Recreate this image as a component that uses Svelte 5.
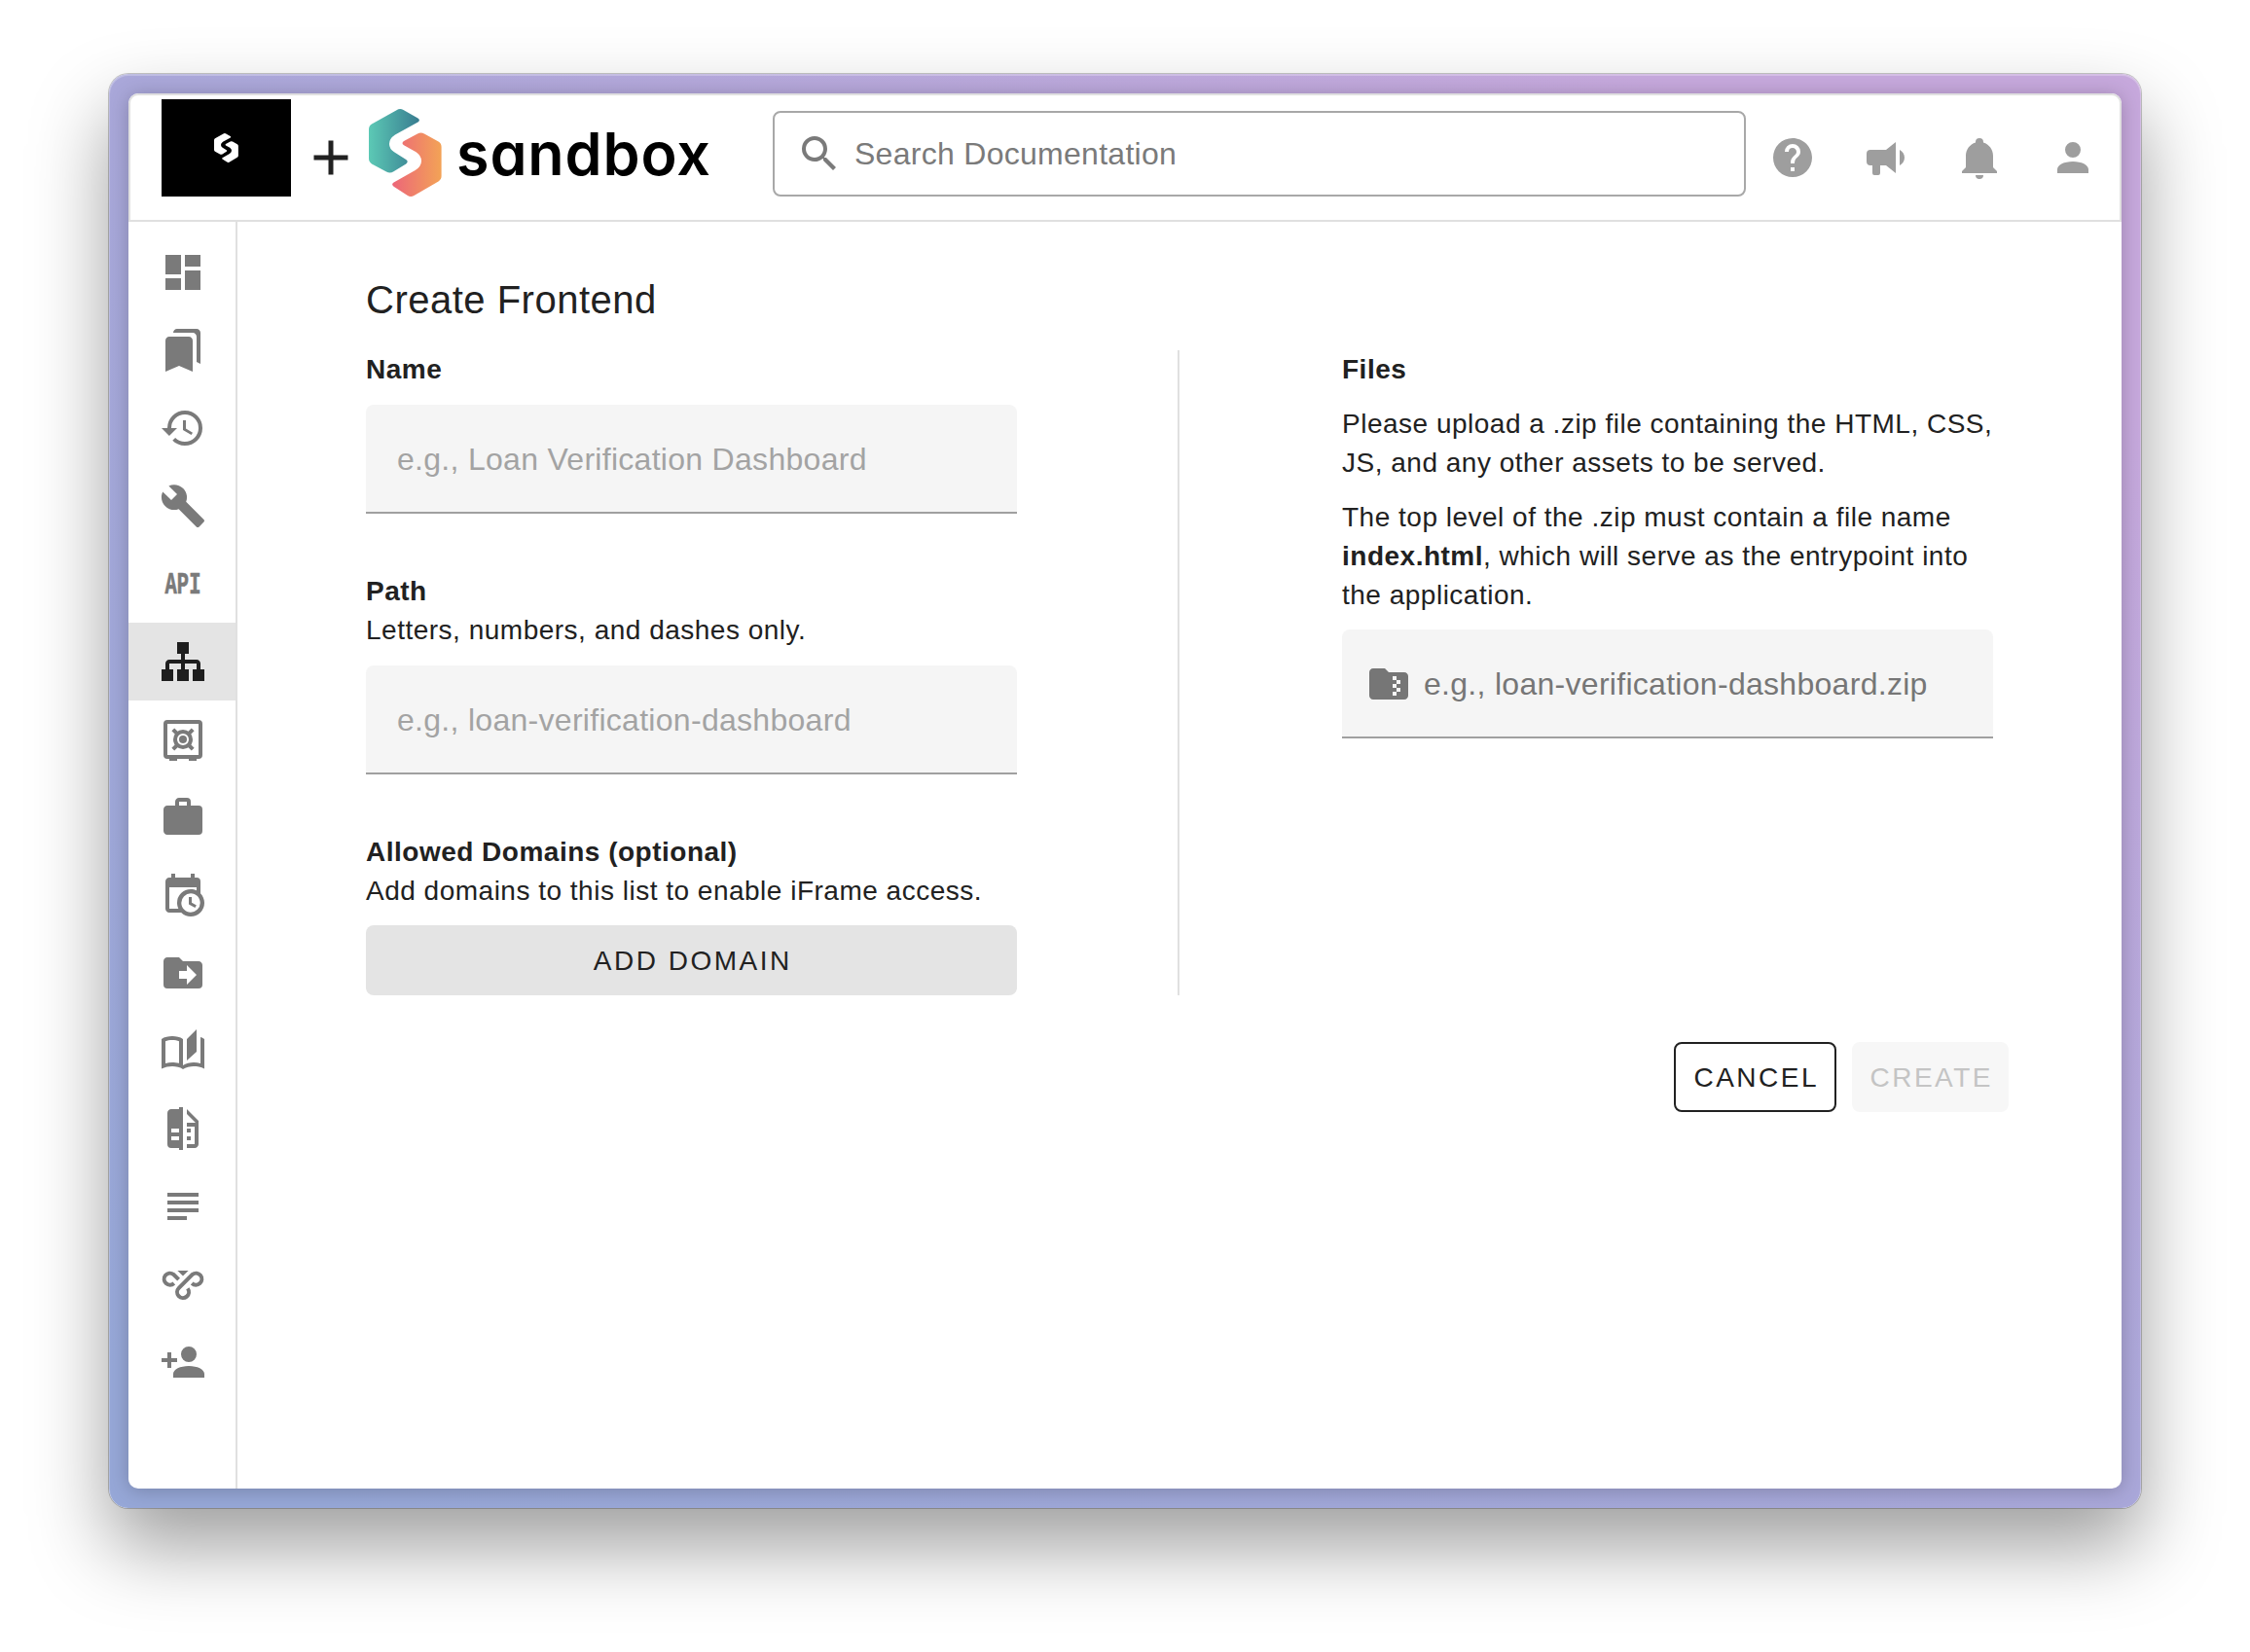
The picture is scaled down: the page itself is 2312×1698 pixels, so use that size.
<script>
  const logoTop =
    'M28.5,1.2 Q32,-1 35.5,1 L50,9.2 Q53.5,11.4 50.5,13.6 L27,26.6 Q21,30.5 21,36 Q21,41 26,44.2 L38.2,52 Q41.2,54 38.2,56.4 L25.5,64.3 Q21.7,66.8 18,64.5 L3,56.4 Q0,54.5 0,51 V21 Q0,17.5 3,15.6 Z';
  const logoBottom =
    'M50,25.4 Q53.5,23.4 57,25.4 L71.5,33.6 Q74.6,35.5 74.6,39 V69 Q74.6,72.5 71.5,74.4 L46.5,89 Q43,91.2 39.5,88.8 L25.6,79.8 Q22.6,77.6 25.6,75.6 L47.7,63 Q54,59 54,53.5 Q54,48 48.5,44.3 L36,37.2 Q33,35.2 36,33 Z';

  const navItems = [
    { name: 'dashboard', path: 'M13,3V9H21V3M13,21H21V11H13M3,21H11V15H3M3,13H11V3H3V13Z' },
    { name: 'bookmarks', path: 'M19 18l2 1V3c0-1.1-.9-2-2-2H8.99C7.89 1 7 1.9 7 3h10c1.1 0 2 .9 2 2v13zM15 5H5c-1.1 0-2 .9-2 2v16l7-3 7 3V7c0-1.1-.9-2-2-2z' },
    { name: 'history', path: 'M13.5,8H12V13L16.28,15.54L17,14.33L13.5,12.25V8M13,3A9,9 0 0,0 4,12H1L4.96,16.03L9,12H6A7,7 0 0,1 13,5A7,7 0 0,1 20,12A7,7 0 0,1 13,19C11.07,19 9.32,18.21 8.06,16.94L6.64,18.36C8.27,20 10.5,21 13,21A9,9 0 0,0 22,12A9,9 0 0,0 13,3' },
    { name: 'tools', path: 'M22.7,19L13.6,9.9C14.5,7.6 14,4.9 12.1,3C10.1,1 7.1,0.6 4.7,1.7L9,6L6,9L1.6,4.7C0.4,7.1 0.9,10.1 2.9,12.1C4.8,14 7.5,14.5 9.8,13.6L18.9,22.7C19.3,23.1 19.9,23.1 20.3,22.7L22.6,20.4C23.1,20 23.1,19.3 22.7,19Z' },
    { name: 'api', label: 'API' },
    { name: 'frontends', active: true, path: 'M9,2V8H11V11H5C3.89,11 3,11.89 3,13V16H1V22H7V16H5V13H11V16H9V22H15V16H13V13H19V16H17V22H23V16H21V13C21,11.89 20.11,11 19,11H13V8H15V2H9Z' },
    { name: 'vault' },
    { name: 'briefcase', path: 'M10,2H14A2,2 0 0,1 16,4V6H20A2,2 0 0,1 22,8V19A2,2 0 0,1 20,21H4C2.89,21 2,20.1 2,19V8C2,6.89 2.89,6 4,6H8V4C8,2.89 8.89,2 10,2M14,6V4H10V6H14Z' },
    { name: 'schedule', path: 'M15,13H16.5V15.82L18.94,17.23L18.19,18.53L15,16.69V13M19,8H5V19H9.67C9.24,18.09 9,17.07 9,16A7,7 0 0,1 16,9C17.07,9 18.09,9.24 19,9.67V8M5,21C3.89,21 3,20.1 3,19V5C3,3.89 3.89,3 5,3H6V1H8V3H16V1H18V3H19A2,2 0 0,1 21,5V11.1C22.24,12.36 23,14.09 23,16A7,7 0 0,1 16,23C14.09,23 12.36,22.24 11.1,21H5M16,11.15A4.85,4.85 0 0,0 11.15,16C11.15,18.68 13.32,20.85 16,20.85A4.85,4.85 0 0,0 20.85,16C20.85,13.32 18.68,11.15 16,11.15Z' },
    { name: 'transfers', path: 'M14,18V15H10V11H14V8L19,13M20,6H12L10,4H4C2.89,4 2,4.89 2,6V18A2,2 0 0,0 4,20H20A2,2 0 0,0 22,18V8C22,6.89 21.1,6 20,6Z' },
    { name: 'docs', path: 'M19 1L14 6V17L19 12.5V1M21 5V18.5C19.9 18.15 18.7 18 17.5 18C15.8 18 13.35 18.65 12 19.5V6C10.55 4.9 8.45 4.5 6.5 4.5C4.55 4.5 2.45 4.9 1 6V21.3C2.6 20.4 4.9 20 6.5 20C8.45 20 10.55 20.4 12 21.5C13.35 20.65 15.8 20 17.5 20C19.15 20 21.3 20.3 23 21.3V6C22.4 5.55 21.75 5.25 21 5M10 18.41C8.75 18.09 7.5 18 6.5 18C5.44 18 4.18 18.19 3 18.5V7.13C3.91 6.73 5.14 6.5 6.5 6.5C7.86 6.5 9.09 6.73 10 7.13V18.41Z' },
    { name: 'compare', path: 'M10,18H6V16H10V18M10,14H6V12H10V14M10,1V2H6C4.89,2 4,2.89 4,4V20A2,2 0 0,0 6,22H10V23H12V1H10M20,8V20C20,21.11 19.11,22 18,22H14V20H18V11H14V9H18.5L14,4.5V2L20,8M16,14H14V12H16V14M16,18H14V16H16V18Z' },
    { name: 'logs', path: 'M4,5H20V7H4V5M4,9H20V11H4V9M4,13H20V15H4V13M4,17H14V19H4V17Z' },
    { name: 'pipelines' },
    { name: 'invite', path: 'M15,14C10.58,14 7,15.79 7,18V20H23V18C23,15.79 19.42,14 15,14M6,10V7H4V10H1V12H4V15H6V12H9V10M15,12A4,4 0 0,0 19,8A4,4 0 0,0 15,4A4,4 0 0,0 11,8A4,4 0 0,0 15,12Z' }
  ];

  const actions = [
    { name: 'Help', path: 'M15.07,11.25L14.17,12.17C13.45,12.89 13,13.5 13,15H11V14.5C11,13.39 11.45,12.39 12.17,11.67L13.41,10.41C13.78,10.05 14,9.55 14,9C14,7.89 13.1,7 12,7A2,2 0 0,0 10,9H8A4,4 0 0,1 12,5A4,4 0 0,1 16,9C16,9.88 15.64,10.67 15.07,11.25M13,19H11V17H13M12,2A10,10 0 0,0 2,12A10,10 0 0,0 12,22A10,10 0 0,0 22,12C22,6.47 17.5,2 12,2Z' },
    { name: 'Announcements', path: 'M12,8H4A2,2 0 0,0 2,10V14A2,2 0 0,0 4,16H5V20A1,1 0 0,0 6,21H8A1,1 0 0,0 9,20V16H12L17,20V4L12,8M21.5,12C21.5,13.71 20.54,15.26 19,16V8C20.53,8.75 21.5,10.3 21.5,12Z' },
    { name: 'Notifications', path: 'M21,19V20H3V19L5,17V11C5,7.9 7.03,5.17 10,4.29C10,4.19 10,4.1 10,4A2,2 0 0,1 12,2A2,2 0 0,1 14,4C14,4.1 14,4.19 14,4.29C16.97,5.17 19,7.9 19,11V17L21,19M14,21A2,2 0 0,1 12,23A2,2 0 0,1 10,21' },
    { name: 'Account', path: 'M12,4A4,4 0 0,1 16,8A4,4 0 0,1 12,12A4,4 0 0,1 8,8A4,4 0 0,1 12,4M12,14C16.42,14 20,15.79 20,18V20H4V18C4,15.79 7.58,14 12,14Z' }
  ];
</script>

<div class="desktop">
  <div class="frame">
    <div class="window">
      <header>
        <div class="tile">
          <svg class="mark-small" viewBox="0 0 75 90"><path d={logoTop} /><path d={logoBottom} /></svg>
        </div>
        <svg class="plus" viewBox="0 0 24 24"><path d="M19,13H13V19H11V13H5V11H11V5H13V11H19V13Z" /></svg>
        <svg class="mark" viewBox="0 0 75 90">
          <defs>
            <linearGradient id="teal"><stop offset="0" stop-color="#5cc9b5" /><stop offset="1" stop-color="#387c90" /></linearGradient>
            <linearGradient id="coral"><stop offset="0" stop-color="#ec6679" /><stop offset="1" stop-color="#f3a356" /></linearGradient>
          </defs>
          <path d={logoTop} fill="url(#teal)" />
          <path d={logoBottom} fill="url(#coral)" />
        </svg>
        <span class="wordmark">sandbox</span>
        <div class="search">
          <svg class="icon" viewBox="0 0 24 24"><path d="M9.5,3A6.5,6.5 0 0,1 16,9.5C16,11.11 15.41,12.59 14.44,13.73L14.71,14H15.5L20.5,19L19,20.5L14,15.5V14.71L13.73,14.44C12.59,15.41 11.11,16 9.5,16A6.5,6.5 0 0,1 3,9.5A6.5,6.5 0 0,1 9.5,3M9.5,5C7,5 5,7 5,9.5C5,12 7,14 9.5,14C12,14 14,12 14,9.5C14,7 12,5 9.5,5Z" /></svg>
          <span>Search Documentation</span>
        </div>
        <div class="actions">
          {#each actions as action}
            <div class="action"><svg class="icon" viewBox="0 0 24 24" aria-label={action.name}><path d={action.path} /></svg></div>
          {/each}
        </div>
      </header>

      <div class="body">
        <nav>
          {#each navItems as item}
            <div class="nav-item" class:active={item.active}>
              <svg class="icon" viewBox="0 0 24 24" aria-label={item.name}>
                {#if item.path}
                  <path d={item.path} />
                {:else if item.label}
                  <text class="api" x="2.8" y="17" textLength="18.4" lengthAdjust="spacingAndGlyphs">{item.label}</text>
                {:else if item.name === 'vault'}
                  <path d="M5,21.5H9V23H5ZM15,21.5H19V23H15Z" />
                  <g class="stroke">
                    <rect x="3" y="3" width="18" height="18" rx="1" />
                    <circle cx="12" cy="12" r="4" />
                    <path d="M9,9L6.9,6.9M15,9L17.1,6.9M9,15L6.9,17.1M15,15L17.1,17.1" />
                  </g>
                  <circle cx="12" cy="12" r="2" />
                {:else}
                  <path d="M9.2,5H14.8L12,7.8Z" />
                  <g class="stroke">
                    <path d="M7.4,11.5A3,3 0 1,1 7.1,6.9L9.8,9.6" />
                    <path d="M16.6,11.5A3,3 0 1,0 16.9,6.9L9.9,13.9A3,3 0 1,0 14.4,14.2" />
                  </g>
                {/if}
              </svg>
            </div>
          {/each}
        </nav>

        <main>
          <h1>Create Frontend</h1>
          <div class="columns">
            <section>
              <div class="group">
                <h2>Name</h2>
                <div class="field"><span>e.g., Loan Verification Dashboard</span></div>
              </div>
              <div class="group">
                <h2>Path</h2>
                <p>Letters, numbers, and dashes only.</p>
                <div class="field"><span>e.g., loan-verification-dashboard</span></div>
              </div>
              <div class="group">
                <h2>Allowed Domains (optional)</h2>
                <p>Add domains to this list to enable iFrame access.</p>
                <button class="add">ADD DOMAIN</button>
              </div>
            </section>
            <div class="divider"></div>
            <section>
              <h2>Files</h2>
              <p class="para">Please upload a .zip file containing the HTML, CSS,<br />JS, and any other assets to be served.</p>
              <p class="para">The top level of the .zip must contain a file name<br /><b>index.html</b>, which will serve as the entrypoint into<br />the application.</p>
              <div class="field upload">
                <svg class="icon" viewBox="0 0 24 24"><path d="M20 6H12L10 4H4C2.9 4 2 4.9 2 6V18C2 19.1 2.9 20 4 20H20C21.1 20 22 19.1 22 18V8C22 6.9 21.1 6 20 6M18 12H16V14H18V16H16V18H14V16H16V14H14V12H16V10H14V8H16V10H18V12Z" /></svg>
                <span>e.g., loan-verification-dashboard.zip</span>
              </div>
            </section>
          </div>
          <div class="buttons">
            <button class="cancel">CANCEL</button>
            <button class="create" disabled>CREATE</button>
          </div>
        </main>
      </div>
    </div>
  </div>
</div>

<style>
  :global(body) { background: #fff; }
  * { box-sizing: border-box; }
  .desktop {
    width: 2312px;
    height: 1698px;
    padding: 76px 112px 148px;
    overflow: hidden;
    font-family: "Liberation Sans", Arial, sans-serif;
    color: #212121;
  }
  .frame {
    height: 1474px;
    padding: 20px;
    border-radius: 20px;
    background: linear-gradient(to bottom left, #c6a8dc 12%, #a9a7d9 50%, #96a7d7 95%);
    box-shadow: 0 0 0 1px rgba(0, 0, 0, .22), inset 0 1px 0 1px rgba(255, 255, 255, .25), 0 40px 80px rgba(0, 0, 0, .38);
  }
  .window {
    height: 1434px;
    border-radius: 10px;
    background: #fff;
    box-shadow: 0 2px 20px rgba(0, 0, 0, .22);
    overflow: hidden;
    clip-path: inset(-20px round 20px);
  }
  header {
    height: 132px;
    display: flex;
    align-items: flex-start;
    border: 2px solid #e0e0e0;
    border-radius: 10px 10px 0 0;
    padding: 4px 0 0 32px;
  }
  svg { display: block; flex: none; fill: currentColor; overflow: visible; }
  .tile {
    width: 133px;
    height: 100px;
    background: #000;
    color: #fff;
    display: flex;
    align-items: center;
    justify-content: center;
  }
  .mark-small { width: 25px; height: 30px; }
  .plus { width: 60px; height: 60px; margin: 29.5px 0 0 10.5px; }
  .mark { width: 75px; height: 90px; margin: 10px 0 0 9.5px; }
  .wordmark {
    width: 340px;
    margin: 20px 0 0 15px;
    font: 600 61px/72px Inter, sans-serif;
    font-feature-settings: "cv11";
    letter-spacing: .9px;
    color: #000;
  }
  .search {
    width: 1000px;
    height: 88px;
    margin: 12px 0 0 -15px;
    border: 2px solid #a8a8a8;
    border-radius: 8px;
    display: flex;
    align-items: center;
    padding: 0 0 0 22px;
    font-size: 32px;
    letter-spacing: .28px;
    color: #7a7a7a;
  }
  .search span { margin-left: 12px; }
  .icon { width: 48px; height: 48px; }
  .actions { display: flex; margin-top: 36px; color: #9e9e9e; }
  .action { width: 96px; padding-left: 24px; }
  .body { display: flex; height: 1302px; }
  nav { width: 112px; flex: none; padding-top: 12px; border-right: 2px solid #e0e0e0; }
  .nav-item { height: 80px; padding: 16px 0 0 32px; color: #7a7a7a; }
  .nav-item.active { background: #e4e4e4; color: #1e1e1e; }
  .stroke { fill: none; stroke: currentColor; stroke-width: 2; }
  .api {
    font: bold 15.5px "Liberation Mono", monospace;
    stroke: currentColor;
    stroke-width: .35px;
  }
  main { flex: 1; padding: 48px 132px 0; }
  h1, h2, p { margin: 0; }
  h1 { font-size: 40px; line-height: 64px; font-weight: 400; letter-spacing: .5px; }
  .columns { display: grid; grid-template-columns: 669px 1fr 669px; margin-top: 20px; }
  .divider { width: 2px; background: #e0e0e0; justify-self: center; height: 663px; margin-right: 2px; }
  h2, p { font-size: 28px; line-height: 40px; letter-spacing: .5px; white-space: nowrap; }
  .group + .group { margin-top: 60px; }
  .para { margin-top: 16px; }
  .field {
    height: 112px;
    margin-top: 16px;
    padding: 2px 32px 0;
    display: flex;
    align-items: center;
    background: #f5f5f5;
    border-bottom: 2px solid #a0a0a0;
    border-radius: 8px 8px 0 0;
    font-size: 32px;
    letter-spacing: .29px;
    color: #a3a3a3;
    white-space: nowrap;
  }
  .upload { margin-top: 15px; padding: 2px 24px 0; color: #767676; }
  .upload span { margin-left: 12px; }
  button {
    height: 72px;
    padding: 1px 0 0 2.5px;
    border: 0;
    border-radius: 8px;
    font: 28px "Liberation Sans", Arial, sans-serif;
    letter-spacing: 2.5px;
    color: #212121;
  }
  .add { display: block; width: 100%; margin-top: 15px; background: #e4e4e4; }
  .buttons { display: flex; justify-content: flex-end; gap: 16px; margin: 48px -16px 0 0; }
  .cancel { width: 167px; border: 2px solid #212121; background: #fff; }
  .create { width: 161px; background: #f7f7f7; color: #c4c4c4; }
</style>
